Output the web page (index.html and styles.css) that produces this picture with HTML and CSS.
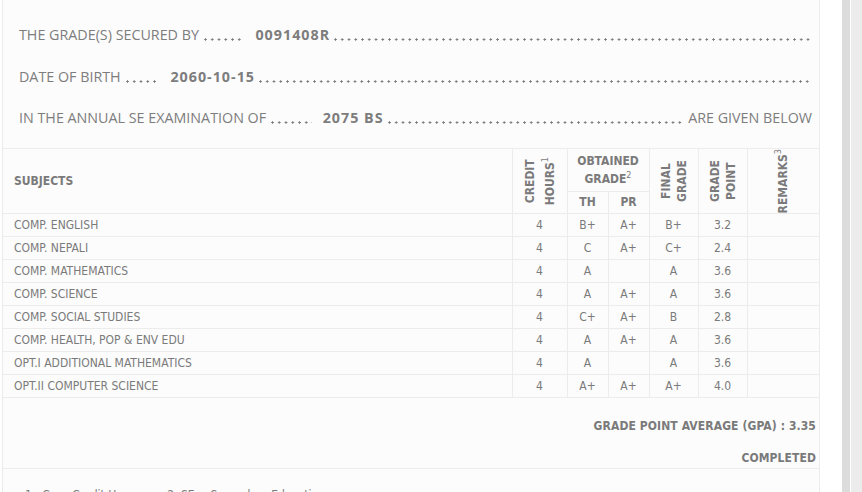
FILE: index.html
```html
<!DOCTYPE html>
<html>
<head>
<meta charset="utf-8">
<link rel="stylesheet" href="styles.css">
</head>
<body>
<div class="page">
  <div class="sheet">
    <div class="intro">
      <div class="line"><span class="lbl">THE GRADE(S) SECURED BY</span><span class="dots d6"></span><b class="val">0091408R</b><span class="fill"></span></div>
      <div class="line"><span class="lbl">DATE OF BIRTH</span><span class="dots d5"></span><b class="val">2060-10-15</b><span class="fill"></span></div>
      <div class="line"><span class="lbl">IN THE ANNUAL SE EXAMINATION OF</span><span class="dots d6"></span><b class="val">2075 BS</b><span class="fill fill-end"></span><span class="tail">ARE GIVEN BELOW</span></div>
    </div>
    <table class="grades">
      <colgroup>
        <col class="c-subj"><col class="c-cr"><col class="c-th"><col class="c-pr"><col class="c-fg"><col class="c-gp"><col class="c-rm">
      </colgroup>
      <thead>
        <tr class="h1">
          <th rowspan="2" class="subj-h">SUBJECTS</th>
          <th rowspan="2" class="vert"><div class="vt vt-wide">CREDIT<br>HOURS<sup>1</sup></div></th>
          <th colspan="2" class="og">OBTAINED<br>GRADE<sup>2</sup></th>
          <th rowspan="2" class="vert"><div class="vt">FINAL<br>GRADE</div></th>
          <th rowspan="2" class="vert"><div class="vt">GRADE<br>POINT</div></th>
          <th rowspan="2" class="vert last"><div class="vt">REMARKS<sup>3</sup></div></th>
        </tr>
        <tr class="h2">
          <th>TH</th>
          <th>PR</th>
        </tr>
      </thead>
      <tbody>
        <tr><td class="subj">COMP. ENGLISH</td><td>4</td><td>B+</td><td>A+</td><td>B+</td><td>3.2</td><td class="last"></td></tr>
        <tr><td class="subj">COMP. NEPALI</td><td>4</td><td>C</td><td>A+</td><td>C+</td><td>2.4</td><td class="last"></td></tr>
        <tr><td class="subj">COMP. MATHEMATICS</td><td>4</td><td>A</td><td></td><td>A</td><td>3.6</td><td class="last"></td></tr>
        <tr><td class="subj">COMP. SCIENCE</td><td>4</td><td>A</td><td>A+</td><td>A</td><td>3.6</td><td class="last"></td></tr>
        <tr><td class="subj">COMP. SOCIAL STUDIES</td><td>4</td><td>C+</td><td>A+</td><td>B</td><td>2.8</td><td class="last"></td></tr>
        <tr><td class="subj">COMP. HEALTH, POP &amp; ENV EDU</td><td>4</td><td>A</td><td>A+</td><td>A</td><td>3.6</td><td class="last"></td></tr>
        <tr><td class="subj">OPT.I ADDITIONAL MATHEMATICS</td><td>4</td><td>A</td><td></td><td>A</td><td>3.6</td><td class="last"></td></tr>
        <tr><td class="subj">OPT.II COMPUTER SCIENCE</td><td>4</td><td>A+</td><td>A+</td><td>A+</td><td>4.0</td><td class="last"></td></tr>
      </tbody>
    </table>
    <div class="summary">
      <p class="gpa">GRADE POINT AVERAGE (GPA) : 3.35</p>
      <p class="status">COMPLETED</p>
    </div>
    <div class="notes">1.&nbsp; Cr. = Credit Hours &nbsp;&nbsp;&nbsp;&nbsp;&nbsp;&nbsp; 2. SE = Secondary Education</div>
  </div>
  <div class="gutter"></div>
  <div class="track"></div>
  <div class="rail"></div>
</div>
</body>
</html>
```

FILE: styles.css
```css
html, body {
  margin: 0;
  padding: 0;
  height: 100%;
  overflow: hidden;
  background: #ffffff;
}

.page {
  display: flex;
  align-items: stretch;
  height: 100%;
}

.sheet {
  margin-left: 2px;
  width: 816px;
  flex: none;
  border-left: 1px solid #ececec;
  border-right: 1px solid #ececec;
  background: #fcfcfc;
  color: #7a7a7a;
}

.gutter {
  width: 22px;
  flex: none;
  background: #ffffff;
}

.track {
  width: 8px;
  flex: none;
  background: #dcdcdc;
  border-right: 1px solid #ffffff;
}

.rail {
  flex: 1;
  background: #ececec;
}

/* intro lines */
.intro {
  padding: 25px 7px 20px 16px;
  display: flex;
  flex-direction: column;
  gap: 21.5px;
  font-family: "Open Sans", "Noto Sans", sans-serif;
  font-size: 14.3px;
  line-height: 20px;
  color: #7d7d7d;
}

.line {
  display: flex;
  white-space: nowrap;
}

.lbl,
.tail {
  flex: none;
}

.dots,
.fill {
  height: 20px;
  background-image: radial-gradient(circle at 1.5px 14.5px, #7a7a7a 0, #7a7a7a 0.95px, rgba(122,122,122,0) 1.3px);
  background-size: 6.75px 20px;
  background-repeat: repeat-x;
}

.dots {
  flex: none;
  margin: 0 11px 0 5px;
}

.d6 { width: 40.5px; }
.d5 { width: 33.75px; }

.val {
  flex: none;
  font-weight: 700;
  letter-spacing: 1px;
}

.fill {
  flex: 1;
  margin-left: 4px;
}

.fill-end {
  margin-right: 3px;
}

/* table */
.grades {
  width: 816px;
  border-collapse: collapse;
  table-layout: fixed;
  font-family: "DejaVu Sans Condensed", "DejaVu Sans", sans-serif;
  font-stretch: condensed;
  font-size: 12px;
  color: #7a7a7a;
}

.c-subj { width: 509px; }
.c-cr { width: 55px; }
.c-th { width: 41px; }
.c-pr { width: 41px; }
.c-fg { width: 49px; }
.c-gp { width: 49px; }
.c-rm { width: 72px; }

.grades th,
.grades td {
  border: 1px solid #ececec;
  padding: 0;
  text-align: center;
}

.grades th:first-child,
.grades td:first-child {
  border-left: none;
}

.grades .last {
  border-right: none;
}

.grades th {
  font-weight: 700;
}

.h1 th {
  height: 41px;
}

.h2 th {
  height: 21px;
  line-height: 21px;
}

.subj-h {
  text-align: left !important;
  padding-left: 11px !important;
}

.og {
  line-height: 18px;
}

.vert .vt {
  writing-mode: vertical-rl;
  transform: rotate(180deg);
  line-height: 16px;
  text-align: center;
  margin: 0 auto;
}

.vert .vt-wide {
  line-height: 20px;
}

.vert .vt sup,
.og sup {
  font-size: 9px;
  font-weight: 400;
  line-height: 0;
}

.grades td {
  height: 22px;
  line-height: 22px;
}

.grades td.subj {
  text-align: left;
  padding-left: 11px;
}

/* summary */
.summary {
  padding: 20px 3px 2px 0;
  border-bottom: 1px solid #ececec;
  font-family: "DejaVu Sans Condensed", "DejaVu Sans", sans-serif;
  font-stretch: condensed;
  font-size: 12px;
  font-weight: 700;
  line-height: 16px;
  letter-spacing: 0.1px;
  text-align: right;
  color: #7a7a7a;
}

.summary p {
  margin: 0;
}

.summary .status {
  margin-top: 16px;
}

.notes {
  padding: 19px 0 0 22px;
  font-family: "DejaVu Sans Condensed", "DejaVu Sans", sans-serif;
  font-stretch: condensed;
  font-size: 12px;
  line-height: 15px;
  color: #7a7a7a;
  white-space: nowrap;
}
```
